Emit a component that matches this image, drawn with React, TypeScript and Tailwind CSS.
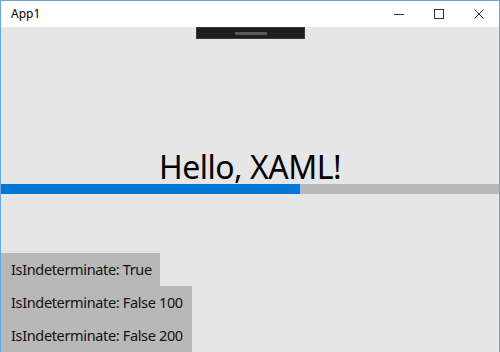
import React from "react";

export default function App() {
  const font = { fontFamily: '"Noto Sans", "Open Sans", sans-serif' };
  return (
    <div className="w-[500px] h-[352px] overflow-hidden flex flex-col border-x border-t border-[#6ea6da] bg-[#e6e6e6]" style={font}>
      <div className="h-[26px] bg-white flex items-center shrink-0">
        <span className="pl-[10px] text-[12px] text-black leading-none">App1</span>
        <div className="ml-auto flex h-full items-center">
          <div className="w-[40px] h-full flex items-center justify-center">
            <div className="w-[10px] h-px bg-[#333]" />
          </div>
          <div className="w-[40px] h-full flex items-center justify-center">
            <div className="w-[10px] h-[10px] border border-[#333]" />
          </div>
          <div className="w-[40px] h-full flex items-center justify-center">
            <svg width="10" height="10" viewBox="0 0 10 10">
              <path d="M0.5 0.5 L9.5 9.5 M9.5 0.5 L0.5 9.5" stroke="#333" strokeWidth="1" />
            </svg>
          </div>
        </div>
      </div>
      <div className="relative flex-1 flex flex-col">
        <div className="absolute left-[195px] top-0 w-[109px] h-[12px] bg-[#1e1e1e] border border-[#3a3a3a] flex items-center justify-center">
          <div className="w-[32px] h-[3px] bg-[#5a5a5a]" />
        </div>
        <div className="h-[157px] flex items-end justify-center">
          <span className="text-[32px] leading-none text-black tracking-[-0.5px] pb-[1px] whitespace-nowrap">Hello, XAML!</span>
        </div>
        <div className="h-[10px] flex">
          <div className="w-[299px] bg-[#0078d7]" />
          <div className="flex-1 bg-[#b8b8b8]" />
        </div>
        <div className="flex-1" />
        <div className="flex flex-col items-start text-[14.5px] text-[#111] tracking-[-0.35px] whitespace-nowrap">
          <div className="h-[33px] bg-[#b8b8b8] flex items-center pl-[10px] w-[159px]">IsIndeterminate: True</div>
          <div className="h-[33px] bg-[#b8b8b8] flex items-center pl-[10px] w-[191px]">IsIndeterminate: False 100</div>
          <div className="h-[33px] bg-[#b8b8b8] flex items-center pl-[10px] w-[191px]">IsIndeterminate: False 200</div>
        </div>
      </div>
    </div>
  );
}
